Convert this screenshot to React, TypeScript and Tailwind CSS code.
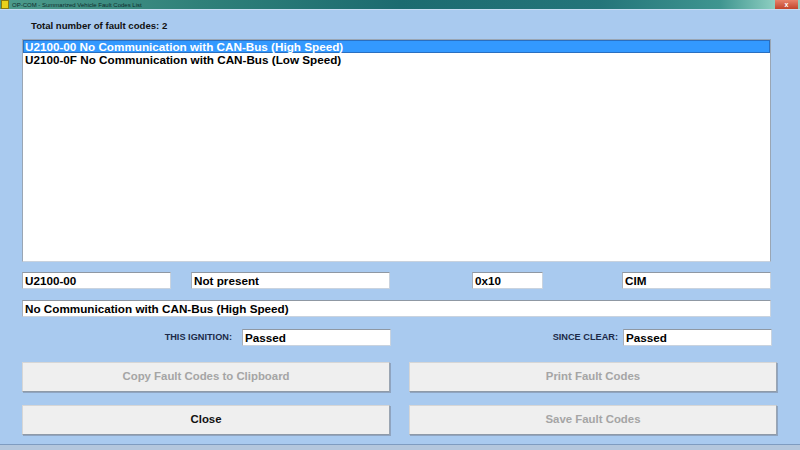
import { ReactNode } from "react";

const font = { fontFamily: '"Liberation Sans", Arial, sans-serif' };

function Field({ className, children }: { className: string; children?: ReactNode }) {
  return (
    <div
      className={`h-[17px] bg-white border border-[#c9d3df] border-t-[#8f98a3] border-l-[#a7afb9] pl-[2px] text-[11.7px] font-bold leading-[15px] text-black whitespace-nowrap overflow-hidden ${className}`}
    >
      {children}
    </div>
  );
}

function Button({ label, disabled }: { label: string; disabled?: boolean }) {
  return (
    <div
      className={`h-[30px] w-[368px] flex items-center justify-center bg-[#efefef] border border-[#d6d6d6] border-b-[#8e9aa8] border-r-[#9aa5b2] shadow-[1px_1px_0_#8fa4c0] text-[11.4px] font-bold ${
        disabled ? "text-[#a5a5a5]" : "text-[#111]"
      }`}
    >
      {label}
    </div>
  );
}

export default function App() {
  return (
    <div className="w-[800px] h-[450px] bg-[#a9caef] flex flex-col overflow-hidden" style={font}>
      {/* title bar */}
      <div className="h-[10px] flex items-center bg-[linear-gradient(90deg,#4e9c8c_0%,#2f8079_25%,#1c6b70_50%,#24757a_75%,#3f9590_90%,#8fd0c2_97%)] border-b border-[#c6dcf2]">
        <div className="w-[8px] h-[9px] bg-[#e8d21c] border border-[#8a7a10] ml-[1px]" />
        <div className="ml-[3px] text-[6px] leading-[8px] text-[#0e2c2c] whitespace-nowrap">
          OP-COM - Summarized Vehicle Fault Codes List
        </div>
        <div className="flex-1" />
        <div className="w-[23px] h-[9px] bg-[linear-gradient(180deg,#e8826a,#c2452c)] mr-[2px] flex items-center justify-center text-white text-[7px] leading-[7px] font-bold">
          x
        </div>
      </div>

      <div className="flex flex-col pl-[22px]">
        <div className="mt-[11px] pl-[9px] h-[10px] text-[9.6px] font-bold leading-[10px] text-[#111]">
          Total number of fault codes: 2
        </div>

        {/* fault list */}
        <div className="mt-[8px] w-[749px] h-[223px] bg-white border border-[#9aa6b4] border-b-[#c8d2de] flex flex-col">
          <div className="h-[13px] bg-[#3399ff] border border-[#2a6fc0] pl-[1px] text-[11.7px] font-bold leading-[11px] text-white whitespace-nowrap">
            U2100-00 No Communication with CAN-Bus (High Speed)
          </div>
          <div className="h-[14px] pl-[2px] text-[11.7px] font-bold leading-[14px] text-black whitespace-nowrap">
            U2100-0F No Communication with CAN-Bus (Low Speed)
          </div>
        </div>

        {/* detail row */}
        <div className="mt-[10px] flex items-center">
          <Field className="w-[149px]">U2100-00</Field>
          <Field className="w-[199px] ml-[20px]">Not present</Field>
          <Field className="w-[71px] ml-[82px]">0x10</Field>
          <Field className="w-[149px] ml-[79px]">CIM</Field>
        </div>

        <Field className="w-[749px] mt-[11px]">No Communication with CAN-Bus (High Speed)</Field>

        <div className="mt-[12px] flex items-center">
          <div className="w-[210px] text-right text-[9.2px] font-bold text-[#1c2a48]">THIS IGNITION:</div>
          <Field className="w-[149px] ml-[10px]">Passed</Field>
          <div className="w-[227px] text-right text-[9.2px] font-bold text-[#1c2a48]">SINCE CLEAR:</div>
          <Field className="w-[149px] ml-[5px]">Passed</Field>
        </div>

        {/* buttons */}
        <div className="mt-[16px] flex gap-[19px]">
          <Button label="Copy Fault Codes to Clipboard" disabled />
          <Button label="Print Fault Codes" disabled />
        </div>
        <div className="mt-[13px] flex gap-[19px]">
          <Button label="Close" />
          <Button label="Save Fault Codes" disabled />
        </div>
      </div>

      <div className="flex-1" />
      <div className="h-[6px] border-t border-[#7f9cc0] bg-[#b4c7dd]" />
    </div>
  );
}
